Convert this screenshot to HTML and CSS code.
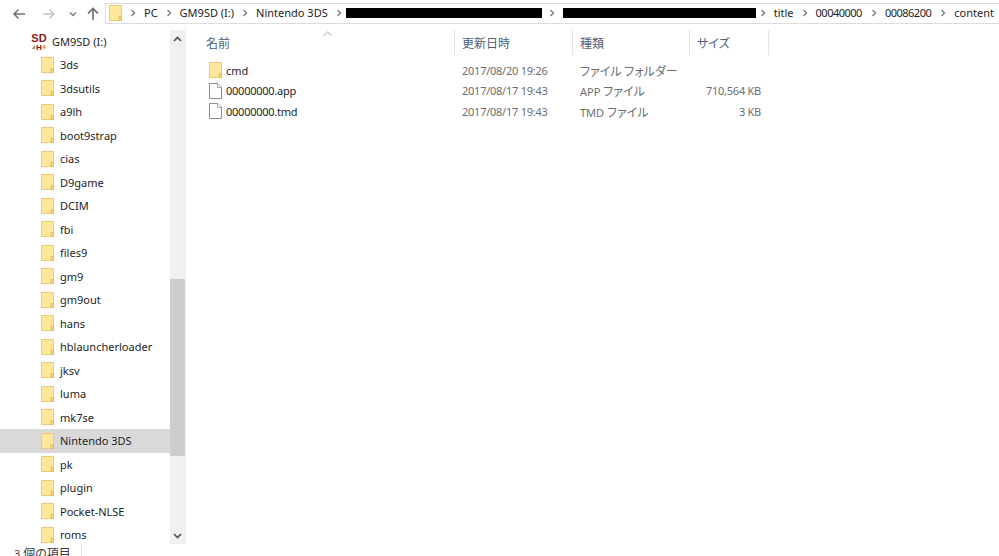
FILE: index.html
```html
<!DOCTYPE html>
<html lang="ja">
<head>
    <meta charset="UTF-8">
    <meta name="viewport" content="width=device-width, initial-scale=1.0">
    <title>content</title>
    <link rel="stylesheet" href="styles.css">
</head>
<body>
    <svg class="defs" width="0" height="0">
        <symbol id="folder" viewBox="0 0 13 16">
            <path d="M.5.5h12v15H.5z" fill="#ffe79c" stroke="#eccb72"/>
            <path d="M10 15.500v-4h2.500v4z" fill="#f7d675" stroke="#e6be5c"/>
        </symbol>
        <symbol id="file" viewBox="0 0 13 16">
            <path d="M.5.5h8.500l3.500 3.500v11.500H.5z" fill="#fff" stroke="#8f8f8f"/>
            <path d="M8.500.5v4h4" fill="#f4f4f4" stroke="#a8a8a8"/>
        </symbol>
        <symbol id="crumb" viewBox="0 0 6 8">
            <path d="M1.500 1l3 3-3 3" fill="none" stroke="#77797c" stroke-width="1.300"/>
        </symbol>
    </svg>

    <div class="nav">
        <div class="nav-buttons">
            <svg class="btn-back" width="14" height="12" viewBox="0 0 14 12"><path d="M13 6H2M6.500 1.500L2 6l4.500 4.500" fill="none" stroke="#6f6f6f" stroke-width="1.500"/></svg>
            <svg class="btn-forward" width="14" height="12" viewBox="0 0 14 12"><path d="M1 6h11M7.500 1.500L12 6l-4.500 4.500" fill="none" stroke="#c6c6c6" stroke-width="1.500"/></svg>
            <svg class="btn-recent" width="8" height="6" viewBox="0 0 8 6"><path d="M1 1.500l3 3 3-3" fill="none" stroke="#7a7a7a" stroke-width="1.300"/></svg>
            <svg class="btn-up" width="12" height="13" viewBox="0 0 12 13"><path d="M6 13V2M1 6.500L6 1.500l5 5" fill="none" stroke="#6a6a6a" stroke-width="1.600"/></svg>
        </div>
        <div class="address">
            <svg class="address-folder" width="13" height="16"><use href="#folder"/></svg>
            <svg class="chev"><use href="#crumb"/></svg><span>PC</span>
            <svg class="chev"><use href="#crumb"/></svg><span>GM9SD (I:)</span>
            <svg class="chev"><use href="#crumb"/></svg><span>Nintendo 3DS</span>
            <svg class="chev"><use href="#crumb"/></svg><span class="redacted"></span>
            <svg class="chev"><use href="#crumb"/></svg><span class="redacted second"></span>
            <svg class="chev"><use href="#crumb"/></svg><span>title</span>
            <svg class="chev"><use href="#crumb"/></svg><span class="digits">00040000</span>
            <svg class="chev"><use href="#crumb"/></svg><span class="digits">00086200</span>
            <svg class="chev"><use href="#crumb"/></svg><span>content</span>
        </div>
    </div>

    <div class="main">
        <div class="sidebar">
            <ul class="tree">
                <li class="drive">
                    <svg class="drive-icon" width="16" height="18" viewBox="0 0 16 18">
                        <text x="8" y="9.500" text-anchor="middle" class="logo-sd">SD</text>
                        <path d="M1 17l3-4v4z" fill="#8a8a8a"/>
                        <text x="8" y="17.500" text-anchor="middle" class="logo-h">H</text>
                        <path d="M11.500 13.500l3 3M14.500 13.500l-3 3M13 12.500v5M11 15h4" stroke="#e8904a" stroke-width=".8"/>
                    </svg>
                    GM9SD (I:)
                </li>
                <li><svg class="folder" width="13" height="16"><use href="#folder"/></svg>3ds</li>
                <li><svg class="folder" width="13" height="16"><use href="#folder"/></svg>3dsutils</li>
                <li><svg class="folder" width="13" height="16"><use href="#folder"/></svg>a9lh</li>
                <li><svg class="folder" width="13" height="16"><use href="#folder"/></svg>boot9strap</li>
                <li><svg class="folder" width="13" height="16"><use href="#folder"/></svg>cias</li>
                <li><svg class="folder" width="13" height="16"><use href="#folder"/></svg>D9game</li>
                <li><svg class="folder" width="13" height="16"><use href="#folder"/></svg>DCIM</li>
                <li><svg class="folder" width="13" height="16"><use href="#folder"/></svg>fbi</li>
                <li><svg class="folder" width="13" height="16"><use href="#folder"/></svg>files9</li>
                <li><svg class="folder" width="13" height="16"><use href="#folder"/></svg>gm9</li>
                <li><svg class="folder" width="13" height="16"><use href="#folder"/></svg>gm9out</li>
                <li><svg class="folder" width="13" height="16"><use href="#folder"/></svg>hans</li>
                <li><svg class="folder" width="13" height="16"><use href="#folder"/></svg>hblauncherloader</li>
                <li><svg class="folder" width="13" height="16"><use href="#folder"/></svg>jksv</li>
                <li><svg class="folder" width="13" height="16"><use href="#folder"/></svg>luma</li>
                <li><svg class="folder" width="13" height="16"><use href="#folder"/></svg>mk7se</li>
                <li class="selected"><svg class="folder" width="13" height="16"><use href="#folder"/></svg>Nintendo 3DS</li>
                <li><svg class="folder" width="13" height="16"><use href="#folder"/></svg>pk</li>
                <li><svg class="folder" width="13" height="16"><use href="#folder"/></svg>plugin</li>
                <li><svg class="folder" width="13" height="16"><use href="#folder"/></svg>Pocket-NLSE</li>
                <li><svg class="folder" width="13" height="16"><use href="#folder"/></svg>roms</li>
            </ul>
            <div class="scrollbar">
                <svg class="scroll-arrow" width="9" height="6" viewBox="0 0 9 6"><path d="M1 5l3.500-3.500L8 5" fill="none" stroke="#505050" stroke-width="1.600"/></svg>
                <div class="scroll-track"><div class="scroll-thumb"></div></div>
                <svg class="scroll-arrow" width="9" height="6" viewBox="0 0 9 6"><path d="M1 1l3.500 3.500L8 1" fill="none" stroke="#505050" stroke-width="1.600"/></svg>
            </div>
        </div>

        <div class="files">
            <div class="row header">
                <div class="cell name-head">名前
                    <svg class="sort" width="9" height="5" viewBox="0 0 9 5"><path d="M.5 4.500l4-3.500 4 3.500" fill="none" stroke="#a9a9a9"/></svg>
                </div>
                <div class="cell">更新日時</div>
                <div class="cell">種類</div>
                <div class="cell">サイズ</div>
            </div>
            <div class="row item">
                <div class="cell name"><svg class="file-icon" width="13" height="16"><use href="#folder"/></svg>cmd</div>
                <div class="cell tight">2017/08/20 19:26</div>
                <div class="cell"><span class="jp">ファイル フォルダー</span></div>
                <div class="cell size"></div>
            </div>
            <div class="row item">
                <div class="cell name tight"><svg class="file-icon" width="13" height="16"><use href="#file"/></svg>00000000.app</div>
                <div class="cell tight">2017/08/17 19:43</div>
                <div class="cell">APP <span class="jp">ファイル</span></div>
                <div class="cell size tight">710,564 KB</div>
            </div>
            <div class="row item">
                <div class="cell name tight"><svg class="file-icon" width="13" height="16"><use href="#file"/></svg>00000000.tmd</div>
                <div class="cell tight">2017/08/17 19:43</div>
                <div class="cell">TMD <span class="jp">ファイル</span></div>
                <div class="cell size tight">3 KB</div>
            </div>
        </div>
    </div>

    <div class="status"><span class="status-text">3 <span class="jp">個の項目</span></span></div>
</body>
</html>
```

FILE: styles.css
```css
html, body {
    height: 100%;
}
body {
    margin: 0;
    overflow: hidden;
    display: flex;
    flex-direction: column;
    background-color: #fff;
    color: #1d1d26;
    font-family: "Noto Sans", "Noto Sans CJK JP", sans-serif;
    font-size: 11px;
}
.defs {
    position: absolute;
}
.jp {
    font-family: "Noto Sans CJK JP", sans-serif;
    font-size: 12px;
    font-feature-settings: "palt";
}
.tight {
    letter-spacing: -0.25px;
}

/* top bar */
.nav {
    display: flex;
    flex: none;
    height: 24px;
    padding-top: 3px;
    box-sizing: border-box;
}
.nav-buttons {
    display: flex;
    align-items: center;
    width: 105px;
    flex: none;
    padding-left: 12px;
    box-sizing: border-box;
}
.btn-forward {
    margin-left: 16px;
}
.btn-recent {
    margin-left: 13px;
}
.btn-up {
    margin-left: 10px;
}
.address {
    flex: 1;
    display: flex;
    align-items: center;
    height: 21px;
    padding: 0 0 2px 3px;
    border: 1px solid #dcdcdc;
    border-right: none;
    box-sizing: border-box;
    white-space: nowrap;
    line-height: 16px;
}
.chev {
    width: 6px;
    height: 8px;
    margin: 0 8px;
    flex: none;
}
.digits {
    margin-right: 1px;
    letter-spacing: -0.5px;
}
.redacted {
    width: 196px;
    height: 10px;
    margin: 0 -1px 0 -4px;
    background-color: #000;
}
.redacted.second {
    width: 193px;
    margin: 0 -4px 0 0;
}

/* main */
.main {
    flex: 1;
    display: flex;
    min-height: 0;
}
.sidebar {
    display: flex;
    width: 186px;
    flex: none;
    height: 520px;
    border-right: 1px solid #f0f0f0;
    box-sizing: border-box;
}
.tree {
    list-style: none;
    margin: 0;
    padding: 5.5px 0 0;
    width: 170px;
    flex: none;
    overflow: hidden;
}
.tree li {
    display: flex;
    align-items: center;
    height: 23.5px;
    padding-left: 41px;
    white-space: nowrap;
}
.tree li.drive {
    padding-left: 31px;
}
.tree li.selected {
    background-color: #d9d9d9;
}
.folder {
    margin-right: 6px;
    flex: none;
}
.drive-icon {
    margin-right: 5px;
}
.logo-sd {
    font-family: "Liberation Sans", sans-serif;
    font-size: 11px;
    font-weight: bold;
    fill: #8c1c1c;
}
.logo-h {
    font-family: "Liberation Sans", sans-serif;
    font-size: 8px;
    font-weight: bold;
    fill: #7a1616;
}
.scrollbar {
    width: 15px;
    flex: none;
    display: flex;
    flex-direction: column;
    align-items: center;
    padding-top: 6px;
    padding-bottom: 5px;
    background-color: #f0f0f0;
    box-sizing: border-box;
    margin-top: 6px;
}
.scroll-track {
    flex: 1;
    width: 100%;
    margin: 4px 0;
    padding-top: 233px;
    box-sizing: border-box;
}
.scroll-thumb {
    height: 177px;
    background-color: #cdcdcd;
}

/* file list */
.files {
    flex: 1;
    padding-top: 6px;
    color: #6d6d6d;
}
.row {
    display: grid;
    grid-template-columns: 269px 118px 117px 79px;
}
.header {
    height: 25px;
    margin-bottom: 5px;
    color: #4c607a;
    font-size: 12px;
    font-family: "Noto Sans CJK JP", sans-serif;
    font-feature-settings: "palt";
}
.header .cell {
    display: flex;
    align-items: center;
    position: relative;
    padding-left: 7px;
    border-right: 1px solid #e5e5e5;
}
.header .name-head {
    padding-left: 20px;
}
.sort {
    position: absolute;
    left: 137px;
    top: 1px;
}
.item {
    height: 20.5px;
    align-items: center;
}
.item .cell {
    padding-left: 7px;
    white-space: nowrap;
}
.item .name {
    display: flex;
    align-items: center;
    padding-left: 23px;
    color: #1d1d26;
}
.file-icon {
    margin-right: 4px;
}
.item .size {
    padding: 0 8px 0 0;
    text-align: right;
}

/* status bar */
.status {
    flex: none;
    height: 12px;
    padding-left: 14px;
    line-height: 18px;
    overflow: hidden;
    color: #3a3a3a;
}
.status-text {
    display: inline-block;
    padding-right: 10px;
    border-right: 1px solid #e5e5e5;
}
```
